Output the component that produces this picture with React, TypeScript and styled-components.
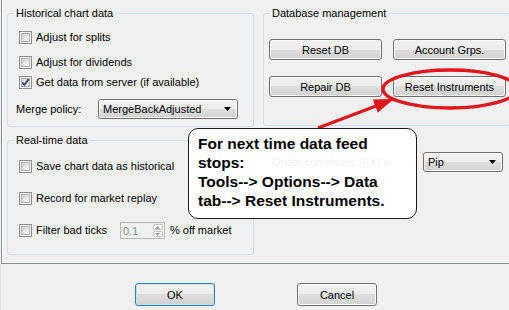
import React from 'react';
import styled, { createGlobalStyle } from 'styled-components';

const GlobalStyle = createGlobalStyle`
	html, body {
		margin: 0;
		padding: 0;
		background: #f0f0f0;
	}
	body {
		font-family: 'Liberation Sans', Arial, sans-serif;
		font-size: 11px;
		color: #000;
	}
`;

const ArrowDown = () => (
	<svg width="7" height="4" viewBox="0 0 7 4">
		<path d="M0 0 H7 L3.5 4 Z" fill="#000" />
	</svg>
);

const Check = ({ label, checked = false }: { label: string; checked?: boolean }) => (
	<CheckRow>
		<Box>
			<BoxInner />
			{checked && (
				<CheckMark width="13" height="13" viewBox="0 0 13 13">
					<path d="M3.2 6.4 L5.4 8.8 L9.8 3.2" fill="none" stroke="#3b4a77" strokeWidth="1.9" />
				</CheckMark>
			)}
		</Box>
		<Label>{label}</Label>
	</CheckRow>
);

const Combo = ({ value, width }: { value: string; width: number }) => (
	<ComboBox $w={width}>
		<span>{value}</span>
		<ArrowDown />
	</ComboBox>
);

const App: React.FC = () => {
	return (
		<>
			<GlobalStyle />
			<Window>
				<TabPage>
					<Column>
						<Group $h={120}>
							<Legend>Historical chart data</Legend>
							<Stack $gaps={[11, 12, 7, 10]}>
								<Check label="Adjust for splits" />
								<Check label="Adjust for dividends" />
								<Check label="Get data from server (if available)" checked />
								<FieldRow>
									<FieldLabel>Merge policy:</FieldLabel>
									<Combo value="MergeBackAdjusted" width={140} />
								</FieldRow>
							</Stack>
						</Group>
						<Group $h={121}>
							<Legend>Real-time data</Legend>
							<Stack $gaps={[13, 19, 19]}>
								<Check label="Save chart data as historical" />
								<Check label="Record for market replay" />
								<CheckLine>
									<Check label="Filter bad ticks" />
									<Spinner>
										<SpinValue>0.1</SpinValue>
										<SpinButtons>
											<SpinBtn>
												<svg width="5" height="3" viewBox="0 0 5 3">
													<path d="M0 3 L2.5 0 L5 3 Z" fill="#a0a0a0" />
												</svg>
											</SpinBtn>
											<SpinBtn>
												<svg width="5" height="3" viewBox="0 0 5 3">
													<path d="M0 0 L2.5 3 L5 0 Z" fill="#a0a0a0" />
												</svg>
											</SpinBtn>
										</SpinButtons>
									</Spinner>
									<Label>% off market</Label>
								</CheckLine>
							</Stack>
						</Group>
					</Column>
					<Column>
						<Group $h={119}>
							<Legend>Database management</Legend>
							<ButtonGrid>
								<Button>Reset DB</Button>
								<Button>Account Grps.</Button>
								<Button>Repair DB</Button>
								<Button>Reset Instruments</Button>
							</ButtonGrid>
						</Group>
						<QuoteRow>
							<span>Quote currencies (FX) in</span>
							<Combo value="Pip" width={80} />
						</QuoteRow>
					</Column>
				</TabPage>
				<Footer>
					<DialogButton $default>OK</DialogButton>
					<DialogButton>Cancel</DialogButton>
				</Footer>

				<Annotation width="509" height="310" viewBox="0 0 509 310">
					<ellipse cx="450" cy="89" rx="67" ry="19" fill="none" stroke="#e3141b" strokeWidth="3.5" />
					<line x1="318" y1="128" x2="376" y2="106" stroke="#e3141b" strokeWidth="3" />
					<polygon points="394,99 377.8,112.6 372.8,99.6" fill="#e3141b" />
				</Annotation>

				<Callout>
					For next time data feed
					<br />
					stops:
					<br />
					Tools--&gt; Options--&gt; Data
					<br />
					tab--&gt; Reset Instruments.
				</Callout>
			</Window>
		</>
	);
};

const Window = styled.div`
	position: relative;
	width: 509px;
	height: 310px;
	overflow: hidden;
	background: #f0f0f0;
`;

const TabPage = styled.div`
	box-sizing: border-box;
	width: 530px;
	height: 264px;
	margin-left: 1px;
	border-left: 1px solid #898c95;
	border-bottom: 1px solid #898c95;
	box-shadow: inset 1px 0 #fff, inset 0 -1px #fff;
	padding: 7px 0 0 5px;
	display: grid;
	grid-template-columns: 247px 247px;
	column-gap: 9px;
	align-items: start;
`;

const Column = styled.div`
	display: flex;
	flex-direction: column;
	gap: 7px;
`;

const Group = styled.fieldset<{ $h: number }>`
	box-sizing: border-box;
	margin: 0;
	padding: 0;
	min-width: 0;
	height: ${props => props.$h}px;
	border: 1px solid #d5dfe5;
	border-radius: 3px;
`;

const Legend = styled.legend`
	margin-left: 6px;
	padding: 0 2px;
	line-height: 13px;
	font-size: 11px;
`;

const Stack = styled.div<{ $gaps: number[] }>`
	display: flex;
	flex-direction: column;
	${props => props.$gaps.map((g, i) => `& > *:nth-child(${i + 1}) { margin-top: ${g}px; }`).join('\n')}
`;

const CheckRow = styled.div`
	display: flex;
	align-items: center;
	gap: 4px;
	height: 13px;
	padding-left: 11px;
`;

const CheckLine = styled.div`
	display: flex;
	align-items: center;
	height: 13px;
`;

const Box = styled.span`
	position: relative;
	box-sizing: border-box;
	width: 13px;
	height: 13px;
	flex: none;
	border: 1px solid #8e8f8f;
	background: #f4f4f4;
	padding: 1px;
`;

const BoxInner = styled.span`
	display: block;
	box-sizing: border-box;
	width: 9px;
	height: 9px;
	border: 1px solid #b1b3b6;
	background: linear-gradient(135deg, #cfd0d2 0%, #e6e6e6 50%, #f8f8f8 100%);
`;

const CheckMark = styled.svg`
	position: absolute;
	left: -1px;
	top: -1px;
`;

const Label = styled.span`
	line-height: 13px;
	white-space: nowrap;
`;

const FieldRow = styled.div`
	display: flex;
	align-items: center;
	height: 20px;
	padding-left: 8px;
`;

const FieldLabel = styled.span`
	width: 82px;
	flex: none;
`;

const ComboBox = styled.div<{ $w: number }>`
	box-sizing: border-box;
	width: ${props => props.$w}px;
	height: 20px;
	display: flex;
	align-items: center;
	justify-content: space-between;
	padding: 0 6px 0 4px;
	border: 1px solid #707070;
	border-radius: 3px;
	background: linear-gradient(#f3f3f3 0%, #ececec 50%, #dedede 50%, #d2d2d2 100%);
	box-shadow: inset 0 0 0 1px #fbfbfb;
`;

const Spinner = styled.div`
	box-sizing: border-box;
	width: 45px;
	height: 17px;
	margin-left: 13px;
	margin-right: 5px;
	display: flex;
	align-items: center;
	justify-content: space-between;
	border: 1px solid #b5b8bb;
	background: #f0f0f0;
	padding: 0 0 0 2px;
`;

const SpinValue = styled.span`
	color: #8d8d8d;
`;

const SpinButtons = styled.div`
	display: flex;
	flex-direction: column;
	gap: 1px;
	padding: 1px;
`;

const SpinBtn = styled.span`
	box-sizing: border-box;
	width: 10px;
	height: 6px;
	display: flex;
	align-items: center;
	justify-content: center;
	border: 1px solid #c6c6c6;
	border-radius: 1px;
	background: #f4f4f4;
`;

const ButtonGrid = styled.div`
	display: grid;
	grid-template-columns: 113px 113px;
	grid-auto-rows: 21px;
	column-gap: 11px;
	row-gap: 16px;
	padding: 19px 0 0 5px;
`;

const Button = styled.button`
	box-sizing: border-box;
	height: 21px;
	padding: 0;
	border: 1px solid #707070;
	border-radius: 3px;
	background: linear-gradient(#f3f3f3 0%, #ececec 50%, #dedede 50%, #d2d2d2 100%);
	box-shadow: inset 0 0 0 1px #fbfbfb;
	font-family: 'Liberation Sans', Arial, sans-serif;
	font-size: 11px;
	color: #000;
`;

const QuoteRow = styled.div`
	display: flex;
	align-items: center;
	justify-content: space-between;
	height: 20px;
	margin-top: 19px;
	padding: 0 7px 0 9px;
`;

const Footer = styled.div`
	display: flex;
	gap: 82px;
	padding: 19px 0 0 135px;
	height: 46px;
	box-sizing: border-box;
	box-shadow: inset 1px 0 #d8e4f2;
`;

const DialogButton = styled(Button)<{ $default?: boolean }>`
	width: 80px;
	height: 23px;
	border-color: ${props => (props.$default ? '#3c7fb1' : '#707070')};
	box-shadow: inset 0 0 0 1px ${props => (props.$default ? '#bfe4f7' : '#fbfbfb')};
`;

const Annotation = styled.svg`
	position: absolute;
	left: 0;
	top: 0;
	pointer-events: none;
`;

const Callout = styled.div`
	position: absolute;
	left: 188px;
	top: 128px;
	box-sizing: border-box;
	width: 229px;
	height: 91px;
	padding: 5px 0 0 9px;
	border: 1.5px solid #1c1c1c;
	border-radius: 10px;
	background: rgba(255, 255, 255, 0.94);
	font-family: 'Liberation Sans', Arial, sans-serif;
	font-weight: bold;
	font-size: 15.5px;
	line-height: 19px;
	white-space: nowrap;
`;

export default App;
